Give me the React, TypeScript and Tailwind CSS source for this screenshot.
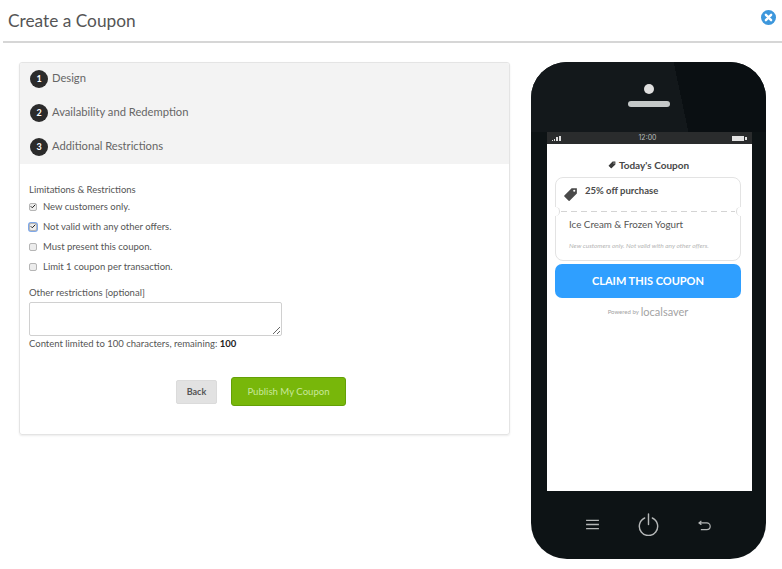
import { Check } from "lucide-react";

const steps = [
  ["1", "Design"],
  ["2", "Availability and Redemption"],
  ["3", "Additional Restrictions"],
];

const limits = [
  { t: "New customers only.", on: true, focus: false },
  { t: "Not valid with any other offers.", on: true, focus: true },
  { t: "Must present this coupon.", on: false, focus: false },
  { t: "Limit 1 coupon per transaction.", on: false, focus: false },
];

function TagIcon({ className }: { className: string }) {
  return (
    <svg viewBox="0 0 20 20" className={className}>
      <path fill="currentColor" fillRule="evenodd" d="M11.5 1.5 18 1.5c.4 0 .5.2.5.5v6.5L8.8 18.2c-.4.4-.9.4-1.3 0L1.8 12.5c-.4-.4-.4-.9 0-1.3ZM15 3.5a1.4 1.4 0 1 0 0 2.8 1.4 1.4 0 0 0 0-2.8Z" />
    </svg>
  );
}

function Phone() {
  return (
    <div className="w-[235px] h-[497px] ml-[21px] rounded-[36px] overflow-hidden bg-[#0d1315] flex flex-col shrink-0">
      <div className="h-[70px] flex flex-col items-center shrink-0 bg-[linear-gradient(78deg,#13181b_0%,#13181b_63%,#0a0f12_63%,#0a0f12_100%)]">
        <div className="w-[10px] h-[10px] rounded-full bg-[#dfdfdf] mt-[22px]"></div>
        <div className="w-[42px] h-[6px] rounded-full bg-[#c4c8c8] mt-[7px]"></div>
      </div>
      <div className="w-[205px] h-[359px] ml-[16px] bg-white flex flex-col items-center shrink-0">
        <div className="w-full h-[12px] bg-[#2a2c2d] flex items-center justify-between px-[5px] text-[7px] text-[#b9bcbc] font-['Inter',sans-serif]">
          <div className="flex items-end gap-[1px] h-[6px]">
            <span className="w-[1px] h-[1px] bg-[#ddd]"></span>
            <span className="w-[1px] h-[2px] bg-[#ddd]"></span>
            <span className="w-[2px] h-[4px] bg-[#ddd]"></span>
            <span className="w-[2px] h-[5px] bg-[#ddd]"></span>
          </div>
          <span className="ml-[2px]">12:00</span>
          <div className="flex items-center">
            <span className="w-[12px] h-[5px] bg-[#e4e4e4]"></span>
            <span className="w-[2px] h-[3px] bg-[#e4e4e4] ml-[1px]"></span>
          </div>
        </div>
        <div className="mt-[15px] h-[12px] -ml-[2px] flex items-center gap-[3px] text-[10px] font-bold text-[#484848]">
          <TagIcon className="w-[8px] h-[8px] text-[#3a3a3a]" />
          Today's Coupon
        </div>
        <div className="relative w-[186px] h-[84px] mt-[6px] -ml-[3px] border border-[#e3e3e3] rounded-[8px]">
          <TagIcon className="absolute left-[7px] top-[9px] w-[15px] h-[15px] text-[#4a4a4a]" />
          <div className="pl-[29px] pt-[6px] text-[9.5px] font-bold text-[#4a4a4a]">25% off purchase</div>
          <div className="absolute left-[5px] right-[5px] top-[33px] h-[1px] bg-[repeating-linear-gradient(90deg,#d4d4d4_0,#d4d4d4_6px,transparent_6px,transparent_10px)]"></div>
          <div className="absolute -left-[5px] top-[29px] w-[9px] h-[9px] rounded-full bg-white border-r border-[#dcdcdc]"></div>
          <div className="absolute -right-[5px] top-[29px] w-[9px] h-[9px] rounded-full bg-white border-l border-[#dcdcdc]"></div>
          <div className="pl-[13px] mt-[19px] text-[9.8px] text-[#555]">Ice Cream &amp; Frozen Yogurt</div>
          <div className="pl-[13px] mt-[9px] text-[6.5px] italic text-[#b5b5b5]">New customers only. Not valid with any other offers.</div>
        </div>
        <div className="w-[186px] h-[34px] mt-[3px] -ml-[3px] rounded-[7px] bg-[#2f9fff] flex items-center justify-center text-white font-bold text-[11px]">
          CLAIM THIS COUPON
        </div>
        <div className="mt-[8px] -ml-[3px] flex items-center gap-[2px] text-[#a3a3a3]">
          <span className="text-[6px]">Powered by</span>
          <span className="text-[11px] leading-none">localsaver</span>
        </div>
      </div>
      <div className="flex-1 relative flex items-center text-[#b4b7b7]">
        <svg viewBox="0 0 14 12" className="w-[13px] h-[11px] ml-[55px] mt-[-1px]">
          <path d="M0 1.5h14M0 6h14M0 10.5h14" stroke="currentColor" strokeWidth="1.6" />
        </svg>
        <svg viewBox="0 0 22 24" className="w-[21px] h-[23px] ml-[39px] mt-[-2px]">
          <path d="M7 5.2a9.6 9.6 0 1 0 8 0M11 1v11" fill="none" stroke="currentColor" strokeWidth="1.5" strokeLinecap="round" />
        </svg>
        <svg viewBox="0 0 14 12" className="w-[13px] h-[11px] ml-[39px]">
          <path d="M1 3.2h8.5a3.6 3.6 0 0 1 0 7.4H3M3.6 1 1 3.2l2.6 2" fill="none" stroke="currentColor" strokeWidth="1.3" />
        </svg>
      </div>
    </div>
  );
}

export default function App() {
  return (
    <div className="w-[782px] h-[569px] bg-white overflow-hidden font-['Lato',sans-serif] text-[#555]">
      <div className="relative h-[43px] ml-[3px] border-b-2 border-[#d6d6d6] pl-[5px] pt-[10px] text-[#555] text-[17.3px] leading-[22px]">
        Create a Coupon
        <svg viewBox="0 0 16 16" className="absolute right-[6px] top-[10px] w-[15px] h-[15px]">
          <circle cx="8" cy="8" r="8" fill="#3d97dc" />
          <path d="M5.2 5.2l5.6 5.6M10.8 5.2l-5.6 5.6" stroke="white" strokeWidth="2.6" strokeLinecap="round" />
        </svg>
      </div>
      <div className="flex pl-[19px] pt-[19px]">
        <div className="w-[491px] h-[373px] rounded-[3px] border border-[#e4e4e4] shadow-[0_1px_2px_rgba(0,0,0,0.08)] overflow-hidden shrink-0">
          <div className="bg-[#f3f3f3] h-[101px] pl-[10px]">
            {steps.map(([n, l]) => (
              <div key={n} className="h-[34px] pt-[7px] flex items-start gap-[4px]">
                <span className="w-[18px] h-[18px] rounded-full bg-[#2b2b2b] text-white text-[9px] font-bold flex items-center justify-center">{n}</span>
                <span className="text-[11.2px] leading-[14px] text-[#666] mt-[1px]">{l}</span>
              </div>
            ))}
          </div>
          <div className="pl-[9px] pt-[19px] text-[9.5px] leading-[13px]">
            <div>Limitations &amp; Restrictions</div>
            <div className="mt-[4px] flex flex-col gap-[7px]">
              {limits.map((c) => (
                <label key={c.t} className="flex items-center gap-[6px] h-[13px]">
                  <span className={`w-[8px] h-[8px] rounded-[2px] border border-[#b5b5b5] bg-[#ececec] flex items-center justify-center ${c.focus ? "shadow-[0_0_0_1px_#7fa8e8]" : ""}`}>
                    {c.on && <Check className="w-[7px] h-[7px] text-[#222]" strokeWidth={4} />}
                  </span>
                  {c.t}
                </label>
              ))}
            </div>
            <div className="mt-[13px]">Other restrictions [optional]</div>
            <textarea className="block mt-[3px] w-[253px] h-[34px] border border-[#d0d0d0] rounded-[2px] bg-white"></textarea>
            <div className="mt-[1px]">
              Content limited to 100 characters, remaining: <b className="text-[#222]">100</b>
            </div>
            <div className="flex items-center mt-[27px] ml-[147px] gap-[14px]">
              <button className="w-[41px] h-[24px] rounded-[2px] bg-[#e2e2e2] border border-[#dbdbdb] text-[9px] font-bold text-[#555]">Back</button>
              <button className="w-[115px] h-[29px] rounded-[3px] bg-[#78b70a] border border-[#64a006] text-[9.6px] text-[#c8e89c]">Publish My Coupon</button>
            </div>
          </div>
        </div>
        <Phone />
      </div>
    </div>
  );
}
